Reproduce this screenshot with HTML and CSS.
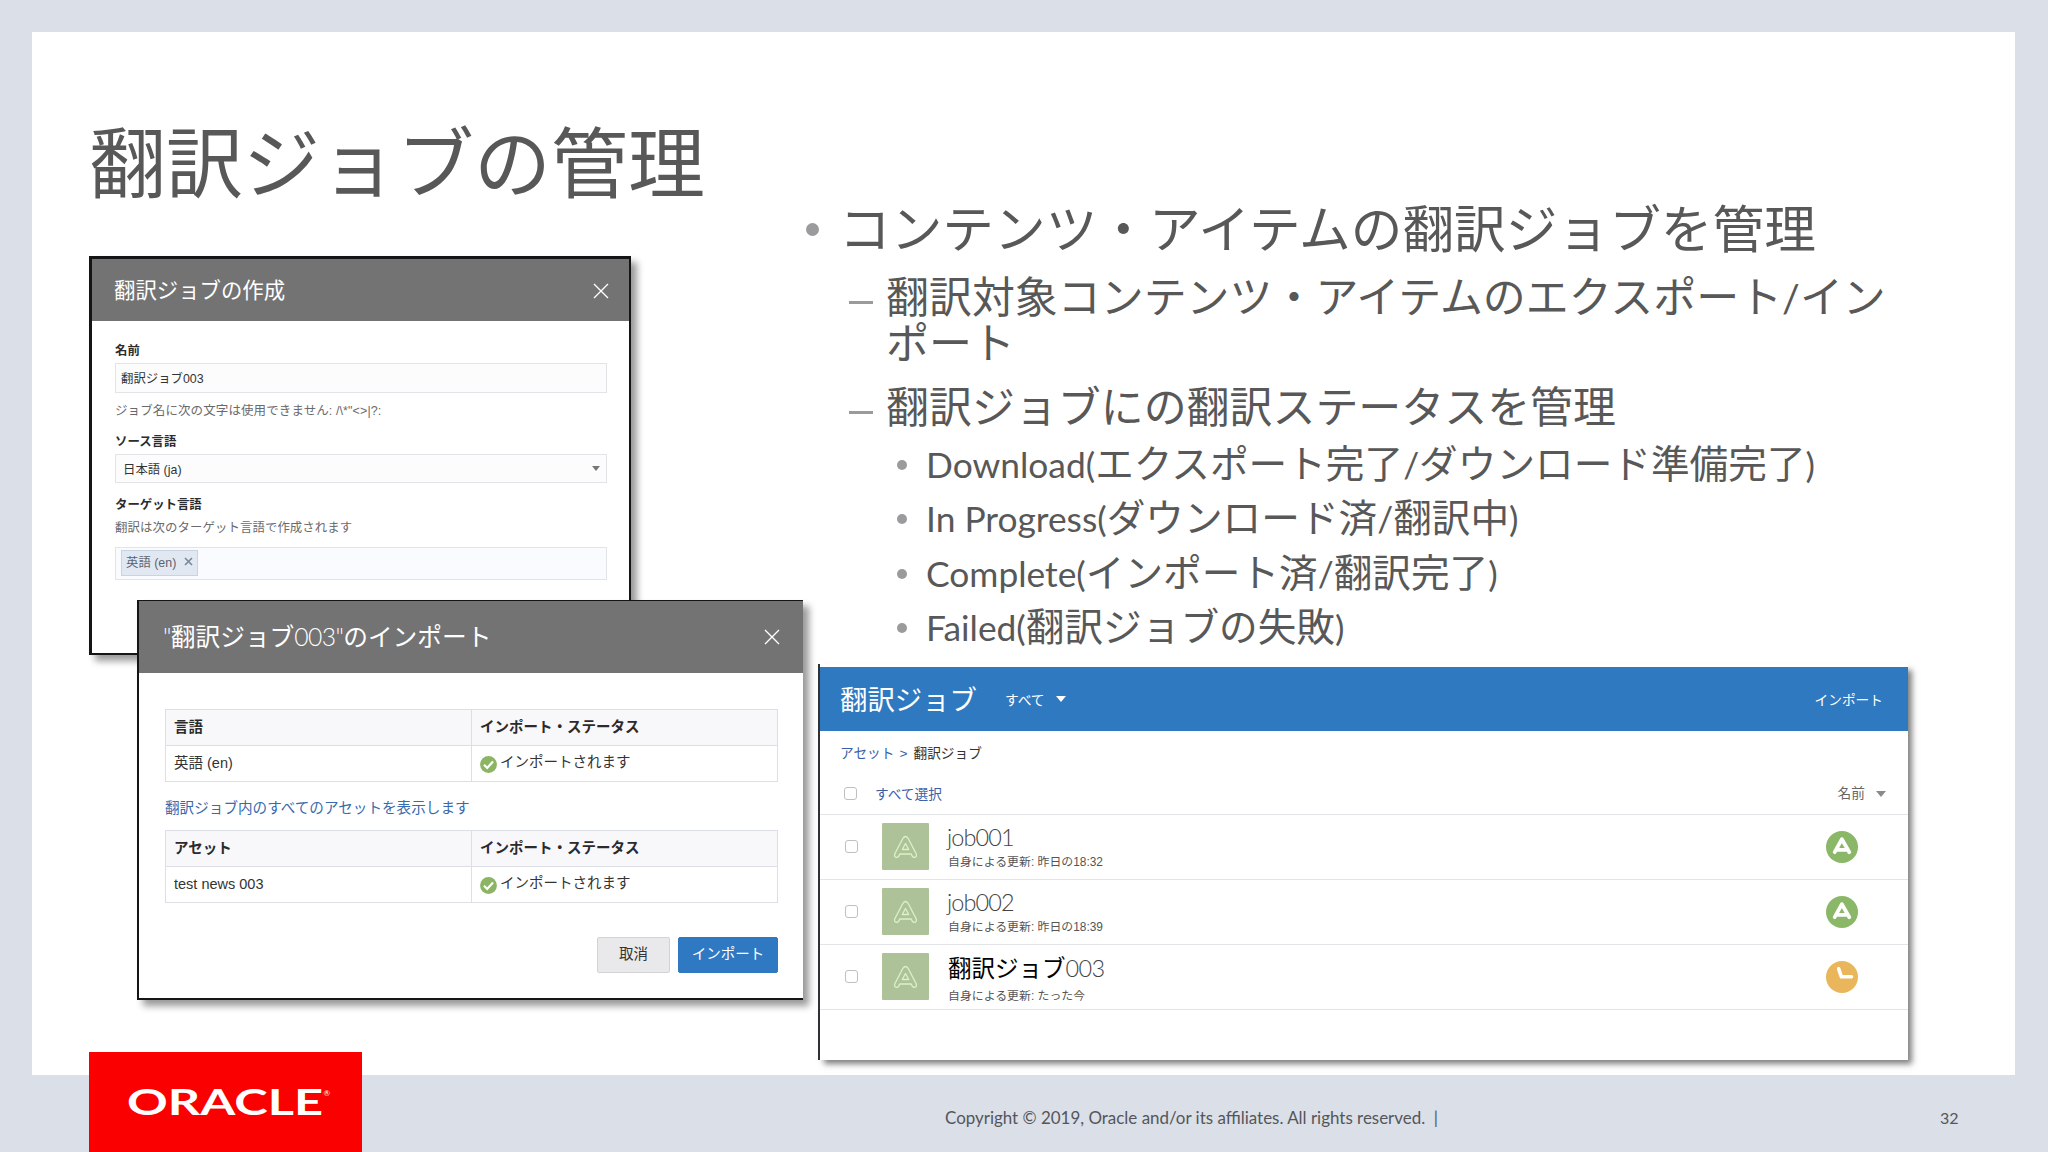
FILE: index.html
```
<!DOCTYPE html>
<html lang="ja">
<head>
  <meta charset="UTF-8" />
  <title>翻訳ジョブの管理</title>
  <link rel="stylesheet" href="styles.css">
</head>
<body>
  <!-- shared icons -->
  <svg class="defs" width="0" height="0">
    <symbol id="close" viewBox="0 0 16 16"><path d="M1 1 L15 15 M15 1 L1 15" fill="none" stroke="currentColor" stroke-width="1.4"/></symbol>
    <symbol id="check" viewBox="0 0 17 17"><circle cx="8.5" cy="8.5" r="8.4" fill="#8cb563"/><path d="M4 8.8 L7.2 12 L13 5.4" fill="none" stroke="#fff" stroke-width="2.2"/></symbol>
    <symbol id="tile" viewBox="0 0 47 47"><rect width="47" height="47" rx="1" fill="#adc298"/><path d="M20.8 15.5 Q23.5 11.5 26.2 15.5 L34.3 31 Q35 34.5 32 34.3 Q30.3 34.2 29.2 31 H17.8 Q16.7 34.2 15 34.3 Q12 34.5 12.7 31 Z M23.5 20.5 L20.3 26.5 H26.7 Z" fill="none" stroke="#d9f3c4" stroke-width="1.3" stroke-linejoin="round"/></symbol>
    <symbol id="done" viewBox="0 0 32 32"><circle cx="16" cy="16" r="16" fill="#8bb768"/><path d="M8.7 21.2 L15.9 8.2 L23.3 21.2 M11 18.8 H21" fill="none" stroke="#fff" stroke-width="3.8" stroke-linecap="round" stroke-linejoin="round"/></symbol>
    <symbol id="pending" viewBox="0 0 32 32"><circle cx="16" cy="16" r="16" fill="#eab65c"/><path d="M12.7 7.8 L15.4 15.8 H25.5" fill="none" stroke="#fff" stroke-width="3.6" stroke-linecap="round" stroke-linejoin="round"/></symbol>
  </svg>

  <div class="slide">
    <div class="left">
      <h1>翻訳ジョブの管理</h1>

      <div class="dialog create">
        <div class="dialog-head">
          <span>翻訳ジョブの作成</span>
          <svg class="close"><use href="#close"/></svg>
        </div>
        <div class="form">
          <div class="label">名前</div>
          <div class="input name">翻訳ジョブ003</div>
          <div class="hint name-hint">ジョブ名に次の文字は使用できません: /\*"&lt;&gt;|?:</div>
          <div class="label">ソース言語</div>
          <div class="input source">日本語 (ja)<svg width="8" height="5"><path d="M0 0H8L4 5Z" fill="#777"/></svg></div>
          <div class="label target-label">ターゲット言語</div>
          <div class="hint">翻訳は次のターゲット言語で作成されます</div>
          <div class="input target"><span class="tag">英語 (en)<svg width="9" height="9" viewBox="0 0 9 9"><path d="M1 1L8 8M8 1L1 8" stroke="#7b8a9b" stroke-width="1.7"/></svg></span></div>
        </div>
      </div>

      <div class="dialog import">
        <div class="dialog-head">
          <span><span class="thin">"</span>翻訳ジョブ<span class="thin">003"</span>のインポート</span>
          <svg class="close"><use href="#close"/></svg>
        </div>
        <div class="import-body">
          <table>
            <tr><th>言語</th><th>インポート・ステータス</th></tr>
            <tr><td>英語 (en)</td><td><svg class="check"><use href="#check"/></svg>インポートされます</td></tr>
          </table>
          <a class="link">翻訳ジョブ内のすべてのアセットを表示します</a>
          <table>
            <tr><th>アセット</th><th>インポート・ステータス</th></tr>
            <tr><td>test news 003</td><td><svg class="check"><use href="#check"/></svg>インポートされます</td></tr>
          </table>
          <div class="buttons">
            <div class="btn cancel">取消</div>
            <div class="btn primary">インポート</div>
          </div>
        </div>
      </div>
    </div>

    <div class="right">
      <ul class="points">
        <li class="l1">コンテンツ・アイテムの翻訳ジョブを管理</li>
        <li class="l2">翻訳対象コンテンツ・アイテムのエクスポート<span class="en">/</span>イン<br>ポート</li>
        <li class="l2 second">翻訳ジョブにの翻訳ステータスを管理</li>
        <li class="l3 first"><span class="en">Download(</span>エクスポート完了<span class="en">/</span>ダウンロード準備完了<span class="en">)</span></li>
        <li class="l3"><span class="en">In Progress(</span>ダウンロード済<span class="en">/</span>翻訳中<span class="en">)</span></li>
        <li class="l3"><span class="en">Complete(</span>インポート済<span class="en">/</span>翻訳完了<span class="en">)</span></li>
        <li class="l3"><span class="en">Failed(</span>翻訳ジョブの失敗<span class="en">)</span></li>
      </ul>

      <div class="jobs">
        <div class="jobs-head">
          <span class="jobs-title">翻訳ジョブ</span>
          <span>すべて</span>
          <svg class="caret" width="10" height="6"><path d="M0 0H10L5 6Z" fill="#fff"/></svg>
          <span class="push">インポート</span>
        </div>
        <div class="crumbs"><a>アセット</a><a class="sep">&gt;</a><span>翻訳ジョブ</span></div>
        <div class="select-all">
          <i class="box"></i><a>すべて選択</a>
          <span class="push sort">名前</span>
          <svg width="10" height="6"><path d="M0 0H10L5 6Z" fill="#8a8a8a"/></svg>
        </div>
        <div class="job">
          <i class="box"></i><svg class="tile"><use href="#tile"/></svg>
          <div class="info"><div class="job-name thin">job001</div><div class="job-meta">自身による更新: 昨日の18:32</div></div>
          <svg class="state"><use href="#done"/></svg>
        </div>
        <div class="job">
          <i class="box"></i><svg class="tile"><use href="#tile"/></svg>
          <div class="info"><div class="job-name thin">job002</div><div class="job-meta">自身による更新: 昨日の18:39</div></div>
          <svg class="state"><use href="#done"/></svg>
        </div>
        <div class="job">
          <i class="box"></i><svg class="tile"><use href="#tile"/></svg>
          <div class="info last"><div class="job-name">翻訳ジョブ<span class="thin">003</span></div><div class="job-meta">自身による更新: たった今</div></div>
          <svg class="state"><use href="#pending"/></svg>
        </div>
      </div>
    </div>
  </div>

  <div class="footer">
    <div class="logo">
      <svg width="273" height="100" viewBox="0 0 273 100">
        <text x="38" y="62.5" class="brand" textLength="196" lengthAdjust="spacingAndGlyphs">ORACLE</text>
        <text x="234.5" y="44" class="reg">®</text>
      </svg>
    </div>
    <div class="copyright">Copyright © 2019, Oracle and/or its affiliates. All rights reserved. &nbsp;|</div>
    <div class="page">32</div>
  </div>
</body>
</html>
```
FILE: styles.css
```
* { box-sizing: border-box; }
body { margin: 0; width: 2048px; height: 1152px; overflow: hidden; background: #dbdfe7; font-family: "Liberation Sans", "Noto Sans CJK JP", sans-serif; color: #333; padding-top: 32px; }
.defs { position: absolute; }
svg { flex: none; }
.slide { display: flex; width: 1983px; height: 1043px; margin-left: 32px; padding-left: 57px; background: #fff; }
.left { width: 729px; }
.right { width: 1090px; }

h1 { margin: 88px 0 46px; height: 90px; line-height: 90px; font-size: 77px; font-weight: 400; color: #585858; white-space: nowrap; }

/* dialogs */
.dialog { background: #fff; box-shadow: 6px 6px 7px rgba(0, 0, 0, 0.4); }
.dialog-head { display: flex; align-items: center; justify-content: space-between; background: #737374; color: #fff; white-space: nowrap; }
.dialog-head > span { padding-bottom: 4px; }
.close { width: 16px; height: 16px; }
.create { width: 542px; height: 399px; border: 2px solid #151517; border-width: 3px 2px 2px 3px; }
.create .dialog-head { height: 62px; padding: 1px 20px 0 22px; font-size: 21.4px; }
.form { padding: 20px 22px 0 23px; font-size: 12.4px; }
.label { height: 22px; line-height: 20px; font-weight: bold; color: #2c2c2e; }
.input { display: flex; align-items: center; border: 1px solid #e3e4e8; background: #fcfcfd; width: 492px; white-space: nowrap; }
.name { height: 30px; padding: 0 5px; }
.hint { line-height: 20px; color: #6a6a6c; letter-spacing: 0.1px; }
.name-hint { margin: 8px 0 11px; font-size: 12.5px; }
.source { height: 29px; padding: 0 6px 0 7px; justify-content: space-between; }
.target-label { margin-top: 12px; height: 23px; }
.target { height: 33px; margin-top: 9px; padding: 0 0 2px 5px; background: #fafbfe; }
.tag { display: flex; align-items: center; gap: 8px; width: 77px; height: 26px; padding: 0 0 2px 4px; background: #e1e8f2; border: 1px solid #c9d4e3; color: #5a6470; }

.thin { font-family: Lato, "Noto Sans CJK JP", sans-serif; font-weight: 300; letter-spacing: -0.6px; }
.import { position: relative; width: 666px; height: 400px; margin: -55px 0 0 48px; border: 2px solid #151517; border-width: 1px 0 2px 2px; }
.import .dialog-head { height: 72px; padding: 0 23px 0 24px; font-size: 24.7px; }
.import-body { padding: 36px 25px 0 26px; font-size: 14.5px; }
table { width: 613px; border-collapse: collapse; table-layout: fixed; }
th, td { height: 36px; padding: 0 8px 2px; border: 1px solid #dddfe6; text-align: left; line-height: 18px; }
th { background: #f8f8fb; color: #2b2b2d; }
.check { width: 17px; height: 17px; margin-right: 3px; vertical-align: -6px; }
.link { display: block; height: 48px; line-height: 53px; font-size: 14.6px; color: #386aae; }
.buttons { display: flex; justify-content: flex-end; gap: 8px; margin-top: 34px; }
.btn { height: 36px; line-height: 32px; border: 1px solid #d3d3d6; border-radius: 2px; text-align: center; }
.cancel { width: 73px; background: #e9e9eb; }
.primary { width: 100px; background: #2f79c2; border-color: #2f79c2; color: #fff; }

/* bullets */
.points { list-style: none; margin: 0; padding: 168px 0 0; color: #585858; white-space: nowrap; height: 632px; }
.points li { position: relative; }
.points li::before { content: ""; position: absolute; background: #9b9b9d; border-radius: 50%; }
.en { font-family: Lato, sans-serif; font-size: 0.915em; }
.l1 { padding-left: 21px; font-size: 51.7px; line-height: 60px; }
.l1::before { left: -12px; top: 23px; width: 13px; height: 13px; }
.l2 { margin-top: 15px; padding-left: 68px; font-size: 42.95px; line-height: 46px; }
.points .l2::before { left: 31px; top: 26px; width: 24px; height: 3px; border-radius: 0; }
.points .second { margin-top: 18px; }
.l3 { padding-left: 108px; font-size: 38.65px; line-height: 54.3px; }
.first { margin-top: 7px; }
.l3::before { left: 79px; top: 22px; width: 10px; height: 10px; }

/* job list */
.jobs { height: 396px; padding-top: 3px; border-left: 2px solid #303136; background: #fff; box-shadow: 5px 5px 6px -1px rgba(0, 0, 0, 0.5); font-size: 13.7px; white-space: nowrap; }
.jobs a { color: #3a5fa8; }
.jobs-head { display: flex; align-items: center; height: 64px; padding: 0 25px 0 20px; background: #2f79c0; color: #fff; }
.jobs-head span { padding-bottom: 1px; }
.jobs-head .jobs-title { padding-bottom: 3px; font-size: 27.4px; margin-right: 28px; }
.caret { margin-left: 11px; }
.push { margin-left: auto; }
.crumbs { display: flex; height: 43px; padding-left: 20px; line-height: 45px; }
.sep { margin: 0 6px 0 5px; }
.select-all { display: flex; align-items: center; height: 41px; padding: 0 22px 1px 24px; border-bottom: 1px solid #e3e4e8; }
.select-all a { margin-left: 18px; padding-bottom: 2px; }
.sort { margin-right: 11px; padding-bottom: 3px; color: #666; }
.box { width: 13px; height: 13px; border: 1px solid #bfc0c6; border-radius: 3px; background: #fff; }
.job { display: flex; align-items: center; height: 65px; padding: 0 50px 1px 25px; border-bottom: 1px solid #e3e4e8; }
.tile { width: 47px; height: 47px; margin: 0 19px 0 24px; }
.info { flex: 1; }
.job-name { height: 30px; line-height: 28px; font-size: 23.5px; color: #000; }
.job-name.thin { margin-left: -1px; letter-spacing: -0.9px; }
.job-name.thin, .job-name .thin { color: #444; }
.job-meta { height: 17px; line-height: 19px; font-size: 11.9px; color: #555; }
.last { padding-top: 4px; }
.last .job-meta { margin-top: 3px; }
.state { width: 32px; height: 32px; }

/* footer */
.footer { display: flex; height: 77px; padding-left: 89px; font-family: Lato, sans-serif; font-size: 16.95px; line-height: 85px; color: #54565c; white-space: nowrap; }
.logo { width: 273px; height: 100px; margin-top: -23px; background: #fb0000; }
.brand { font-family: Lato, sans-serif; font-size: 36px; font-weight: 700; fill: #fff; }
.reg { font-family: Lato, sans-serif; font-size: 8px; fill: #fff; }
.copyright { margin-left: 583px; width: 995px; }
.page { font-size: 16px; }
```
